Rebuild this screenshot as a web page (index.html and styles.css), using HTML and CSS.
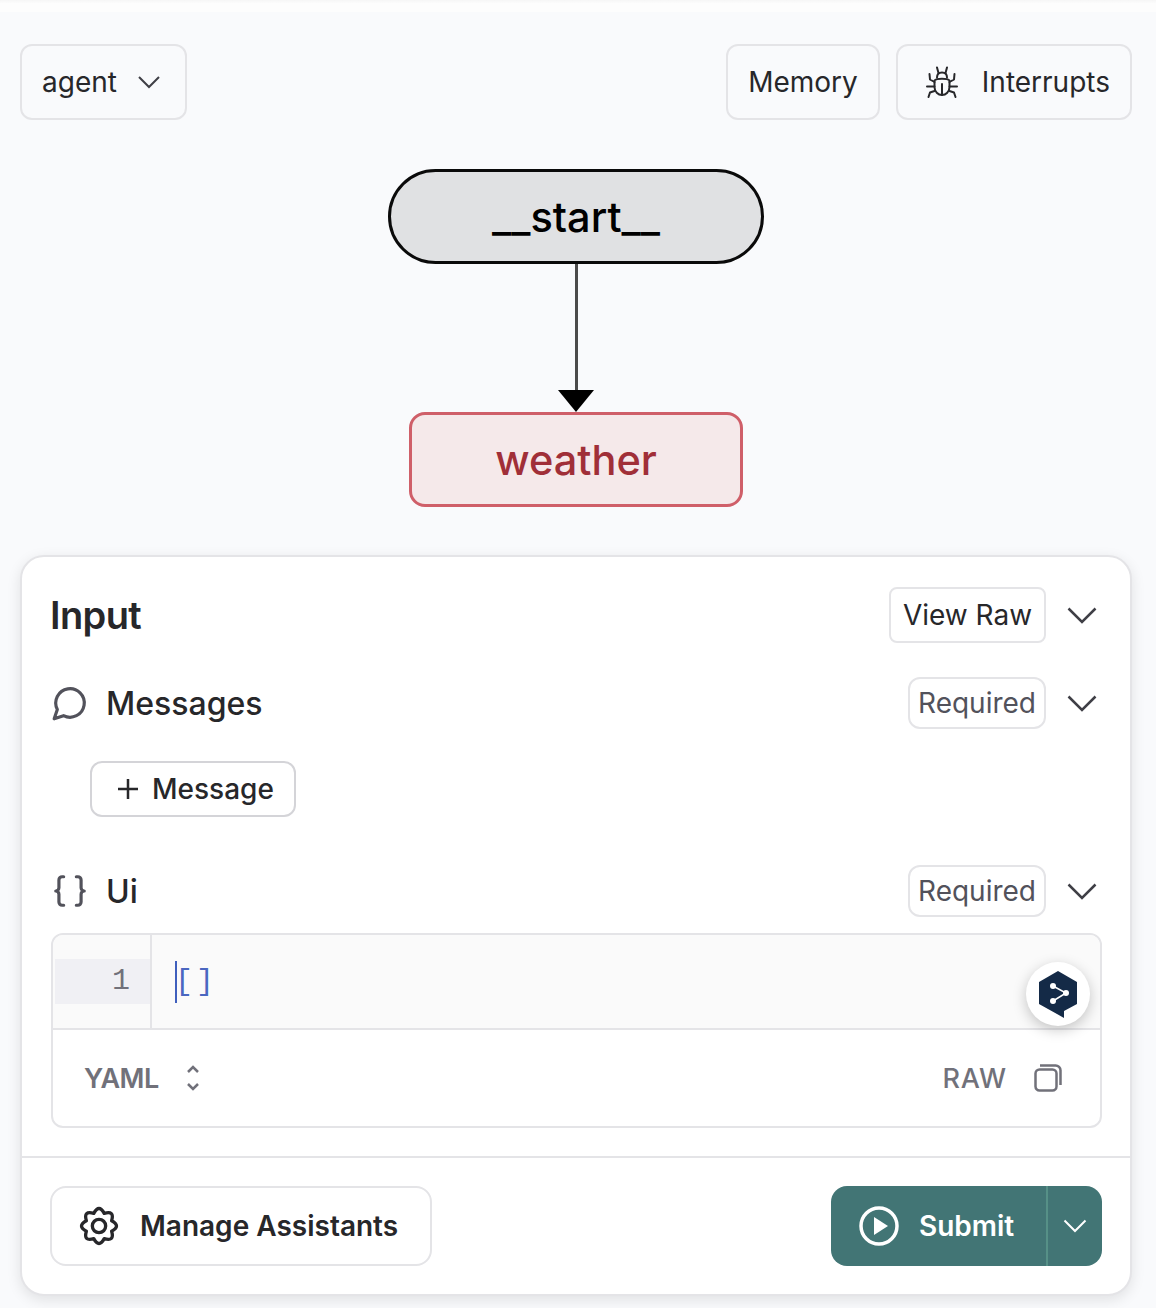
FILE: index.html
```html
<!DOCTYPE html>
<html lang="en">
<head>
<meta charset="UTF-8">
<meta name="viewport" content="width=device-width, initial-scale=1.0">
<title>Graph Studio</title>
<link rel="stylesheet" href="styles.css">
</head>
<body>
<div class="top-strip"></div>

<div class="toolbar">
    <button class="tool-btn agent-btn">agent
        <svg class="chev-sm" viewBox="0 0 24 14"><path d="M2 2l10 10L22 2"/></svg>
    </button>
    <div class="tool-right">
        <button class="tool-btn">Memory</button>
        <button class="tool-btn interrupts-btn">
            <svg class="bug" viewBox="0 0 32 32">
                <path d="M8.500 14.500c2-2.500 13-2.500 15 0v6.500c0 4.500-3.500 8-7.500 8s-7.500-3.500-7.500-8z"/>
                <path d="M11 11.500c0-3 2-5 5-5s5 2 5 5M16 18v11"/>
                <path d="M11 1.500l1.500 5.500M21 1.500l-1.500 5.500M8.500 16L4 13.500 3.500 8M23.500 16l4.500-2.500.5-5.500M1 20.500h7.500M23.500 20.500h7.500M8.500 25L4 26.500 2.500 31M23.500 25l4.500 1.500 1.500 4.500"/>
            </svg>
            Interrupts
        </button>
    </div>
</div>

<div class="graph">
    <div class="node-start">__start__</div>
    <div class="edge"></div>
    <div class="arrow"></div>
    <div class="node-weather">weather</div>
</div>

<div class="card">
    <div class="card-body">
        <div class="row input-row">
            <h2 class="input-title">Input</h2>
            <div class="row-right">
                <button class="raw-btn">View Raw</button>
                <svg class="chev" viewBox="0 0 30 17"><path d="M1.500 1.500L15 15 28.500 1.500"/></svg>
            </div>
        </div>

        <div class="row field-row">
            <div class="field-name">
                <svg class="field-icon" viewBox="0 0 24 24"><path d="M7.900 20A9 9 0 1 0 4 16.100L2 22Z"/></svg>
                Messages
            </div>
            <div class="row-right">
                <span class="required">Required</span>
                <svg class="chev" viewBox="0 0 30 17"><path d="M1.500 1.500L15 15 28.500 1.500"/></svg>
            </div>
        </div>

        <button class="add-btn">
            <svg class="plus" viewBox="0 0 22 22"><path d="M11 1v20M1 11h20"/></svg>
            Message
        </button>

        <div class="row field-row ui-row">
            <div class="field-name">
                <svg class="field-icon" viewBox="0 0 24 24">
                    <path d="M8 3H7a2 2 0 0 0-2 2v5a2 2 0 0 1-2 2 2 2 0 0 1 2 2v5c0 1.100.900 2 2 2h1"/>
                    <path d="M16 21h1a2 2 0 0 0 2-2v-5c0-1.100.900-2 2-2a2 2 0 0 1-2-2V5a2 2 0 0 0-2-2h-1"/>
                </svg>
                Ui
            </div>
            <div class="row-right">
                <span class="required">Required</span>
                <svg class="chev" viewBox="0 0 30 17"><path d="M1.500 1.500L15 15 28.500 1.500"/></svg>
            </div>
        </div>

        <div class="editor">
            <div class="code">
                <div class="gutter"><div class="line-no">1</div></div>
                <div class="code-line"><span class="caret"></span><span class="brackets">[]</span></div>
            </div>
            <div class="editor-foot">
                <div class="foot-side">
                    <span class="foot-label yaml">YAML</span>
                    <svg class="updown" viewBox="0 0 14 28"><path d="M2 8l5-5 5 5M2 20l5 5 5-5"/></svg>
                </div>
                <div class="foot-side">
                    <span class="foot-label raw">RAW</span>
                    <svg class="copy" viewBox="0 0 28 28">
                        <rect x="1.500" y="5.500" width="21" height="21" rx="4"/>
                        <path d="M6 1.500h15a5 5 0 0 1 5.500 5.500v14"/>
                    </svg>
                </div>
            </div>
            <div class="deepl">
                <svg viewBox="0 0 38 47">
                    <path class="deepl-hex" d="M19 0L38 11V33L25 40V47L18 43L0 33V11Z"/>
                    <path class="deepl-line" d="M14 15L27 22L14 30"/>
                    <circle class="deepl-dot" cx="14" cy="15" r="3"/>
                    <circle class="deepl-dot" cx="27" cy="22" r="3"/>
                    <circle class="deepl-dot" cx="14" cy="30" r="3"/>
                </svg>
            </div>
        </div>
    </div>

    <div class="card-foot">
        <button class="manage-btn">
            <svg class="gear" viewBox="0 0 24 24">
                <path d="M15.140 4.420Q21.475 2.525 19.580 8.860Q25.400 12 19.580 15.140Q21.475 21.475 15.140 19.580Q12 25.400 8.860 19.580Q2.525 21.475 4.420 15.140Q-1.400 12 4.420 8.860Q2.525 2.525 8.860 4.420Q12 -1.400 15.140 4.420Z"/>
                <circle cx="12" cy="12" r="4"/>
            </svg>
            Manage Assistants
        </button>
        <div class="submit-group">
            <button class="submit-btn">
                <svg class="play" viewBox="0 0 40 40">
                    <circle cx="20" cy="20" r="18"/>
                    <path class="play-tri" d="M15 11l14 9-14 9z"/>
                </svg>
                Submit
            </button>
            <button class="submit-more">
                <svg class="chev-white" viewBox="0 0 24 14"><path d="M1.500 1.500L12 12 22.500 1.500"/></svg>
            </button>
        </div>
    </div>
</div>
</body>
</html>
```

FILE: styles.css
```css
* {
    box-sizing: border-box;
}
html, body {
    margin: 0;
    height: 100%;
}
body {
    background: #f9fafc;
    color: #27272a;
    font-family: Inter, "Liberation Sans", sans-serif;
    overflow: hidden;
}
button {
    font-family: inherit;
    cursor: pointer;
}
svg {
    display: block;
    flex: none;
    fill: none;
}

.top-strip {
    height: 12px;
    background: linear-gradient(to bottom, #f6f6f6, #fdfdfd 30%, #fdfdfd);
}

/* top bar */
.toolbar {
    display: flex;
    justify-content: space-between;
    padding: 32px 24px 0 20px;
}
.tool-right {
    display: flex;
    gap: 16px;
}
.tool-btn {
    display: flex;
    align-items: center;
    height: 76px;
    padding: 0 20px;
    background: transparent;
    border: 2px solid #e4e4e7;
    border-radius: 12px;
    color: #27272a;
    font-size: 28px;
}
.agent-btn {
    gap: 20px;
    width: 167px;
}
.interrupts-btn {
    gap: 24px;
    padding-left: 28px;
}
.chev-sm {
    width: 24px;
    height: 14px;
}
.chev-sm path {
    stroke: #3f3f46;
    stroke-width: 2;
}
.bug {
    width: 32px;
    height: 32px;
}
.bug path {
    stroke: #27272a;
    stroke-width: 2;
    stroke-linecap: round;
    stroke-linejoin: round;
}

/* graph */
.graph {
    display: flex;
    flex-direction: column;
    align-items: center;
    margin-top: 49px;
    padding-right: 4px;
}
.node-start {
    display: flex;
    align-items: center;
    justify-content: center;
    width: 376px;
    height: 95px;
    background: #e0e1e3;
    border: 3px solid #0a0a0a;
    border-radius: 48px;
    color: #000;
    font-size: 41.5px;
    font-weight: 500;
}
.edge {
    width: 3px;
    height: 126px;
    background: #4b4b4b;
}
.arrow {
    width: 0;
    height: 0;
    border-left: 18px solid transparent;
    border-right: 18px solid transparent;
    border-top: 22px solid #000;
}
.node-weather {
    display: flex;
    align-items: center;
    justify-content: center;
    width: 334px;
    height: 95px;
    background: #f5e9ea;
    border: 3px solid #cf5f69;
    border-radius: 16px;
    color: #a02f38;
    font-size: 41.5px;
    font-weight: 500;
}

/* input card */
.card {
    margin: 48px 24px 0 20px;
    background: #fff;
    border: 2px solid #e4e4e7;
    border-radius: 24px;
    box-shadow: 0 4px 14px rgba(0, 0, 0, 0.1);
}
.card-body {
    padding: 30px 28px 28px 29px;
    border-bottom: 2px solid #e4e4e7;
}
.row {
    display: flex;
    align-items: center;
    justify-content: space-between;
}
.row-right {
    display: flex;
    align-items: center;
    gap: 21px;
}
.input-row {
    height: 56px;
}
.input-title {
    margin: 0 0 0 -1px;
    font-size: 38px;
    font-weight: 600;
    letter-spacing: -0.6px;
}
.raw-btn {
    width: 157px;
    height: 56px;
    padding: 0;
    background: #fff;
    border: 2px solid #e4e4e7;
    border-radius: 8px;
    color: #27272a;
    font-size: 28px;
}
.chev {
    width: 30px;
    height: 17px;
    margin-right: 5px;
}
.chev path {
    stroke: #3f3f46;
    stroke-width: 2.5;
}

.field-row {
    height: 52px;
    margin-top: 34px;
}
.field-name {
    display: flex;
    align-items: center;
    gap: 17px;
    font-size: 32px;
    font-weight: 500;
}
.field-icon {
    width: 38px;
    height: 38px;
}
.field-icon path {
    stroke: #52525b;
    stroke-width: 2;
    stroke-linecap: round;
    stroke-linejoin: round;
}
.required {
    display: flex;
    align-items: center;
    justify-content: center;
    width: 138px;
    height: 52px;
    border: 2px solid #e4e4e7;
    border-radius: 12px;
    color: #52525b;
    font-size: 28px;
}
.add-btn {
    display: flex;
    align-items: center;
    gap: 13px;
    width: 206px;
    height: 56px;
    margin: 32px 0 0 39px;
    padding: 0 0 0 25px;
    background: #fff;
    border: 2px solid #d4d4d8;
    border-radius: 12px;
    color: #27272a;
    font-size: 28px;
    font-weight: 500;
}
.plus {
    width: 22px;
    height: 22px;
}
.plus path {
    stroke: #27272a;
    stroke-width: 2.5;
}
.ui-row {
    margin-top: 48px;
}

/* editor */
.editor {
    position: relative;
    margin-top: 16px;
    background: #fff;
    border: 2px solid #e4e4e7;
    border-radius: 12px;
}
.code {
    display: flex;
    height: 95px;
    background: #fafafa;
    border-bottom: 2px solid #e4e4e7;
    border-radius: 10px 10px 0 0;
}
.gutter {
    width: 99px;
    padding: 24px 0 0 2px;
    border-right: 2px solid #e4e4e7;
}
.line-no {
    height: 45px;
    padding-right: 20px;
    background: #f0f0f4;
    color: #71717a;
    font-family: "Liberation Mono", monospace;
    font-size: 30px;
    line-height: 45px;
    text-align: right;
}
.code-line {
    display: flex;
    align-items: center;
    height: 45px;
    margin-top: 24px;
    padding-left: 23px;
}
.caret {
    width: 2px;
    height: 42px;
    background: #3f5fbd;
}
.brackets {
    margin-left: -2px;
    color: #4a67c0;
    font-family: "Liberation Mono", monospace;
    font-size: 30px;
    letter-spacing: 3px;
}
.editor-foot {
    display: flex;
    align-items: center;
    justify-content: space-between;
    height: 96px;
    padding: 0 38px 0 31px;
}
.foot-side {
    display: flex;
    align-items: center;
    gap: 27px;
}
.foot-label {
    color: #71717a;
    font-size: 27px;
    font-weight: 600;
    letter-spacing: -0.6px;
}
.foot-label.raw {
    font-weight: 500;
    letter-spacing: 0.8px;
}
.updown {
    width: 14px;
    height: 28px;
}
.updown path {
    stroke: #71717a;
    stroke-width: 2.5;
}
.copy {
    width: 28px;
    height: 28px;
}
.copy rect, .copy path {
    stroke: #71717a;
    stroke-width: 2.5;
}
.deepl {
    position: absolute;
    top: 27px;
    right: 10px;
    display: flex;
    align-items: center;
    justify-content: center;
    width: 64px;
    height: 64px;
    background: #fff;
    border-radius: 50%;
    box-shadow: 0 4px 14px rgba(0, 0, 0, 0.22);
}
.deepl svg {
    width: 38px;
    height: 47px;
}
.deepl-hex {
    fill: #142a47;
}
.deepl-line {
    stroke: #fff;
    stroke-width: 1.5;
}
.deepl-dot {
    fill: #fff;
}

/* card footer */
.card-foot {
    display: flex;
    align-items: center;
    justify-content: space-between;
    padding: 28px;
}
.manage-btn {
    display: flex;
    align-items: center;
    gap: 21px;
    width: 382px;
    height: 80px;
    padding: 0 0 0 27px;
    background: #fff;
    border: 2px solid #e4e4e7;
    border-radius: 16px;
    color: #27272a;
    font-size: 28px;
    font-weight: 600;
}
.gear {
    width: 40px;
    height: 40px;
}
.gear path, .gear circle {
    stroke: #27272a;
    stroke-width: 2;
    stroke-linejoin: round;
}
.submit-group {
    display: flex;
    width: 271px;
    height: 80px;
    overflow: hidden;
    background: #427575;
    border-radius: 16px;
}
.submit-btn {
    display: flex;
    align-items: center;
    gap: 20px;
    width: 217px;
    padding: 0 0 0 28px;
    background: none;
    border: none;
    border-right: 2px solid #569087;
    color: #fff;
    font-size: 28px;
    font-weight: 600;
}
.play {
    width: 40px;
    height: 40px;
}
.play circle {
    stroke: #fff;
    stroke-width: 3.5;
}
.play-tri {
    fill: #fff;
}
.submit-more {
    display: flex;
    align-items: center;
    justify-content: center;
    flex: 1;
    padding: 0;
    background: none;
    border: none;
}
.chev-white {
    width: 24px;
    height: 14px;
}
.chev-white path {
    stroke: #fff;
    stroke-width: 2;
}
```
